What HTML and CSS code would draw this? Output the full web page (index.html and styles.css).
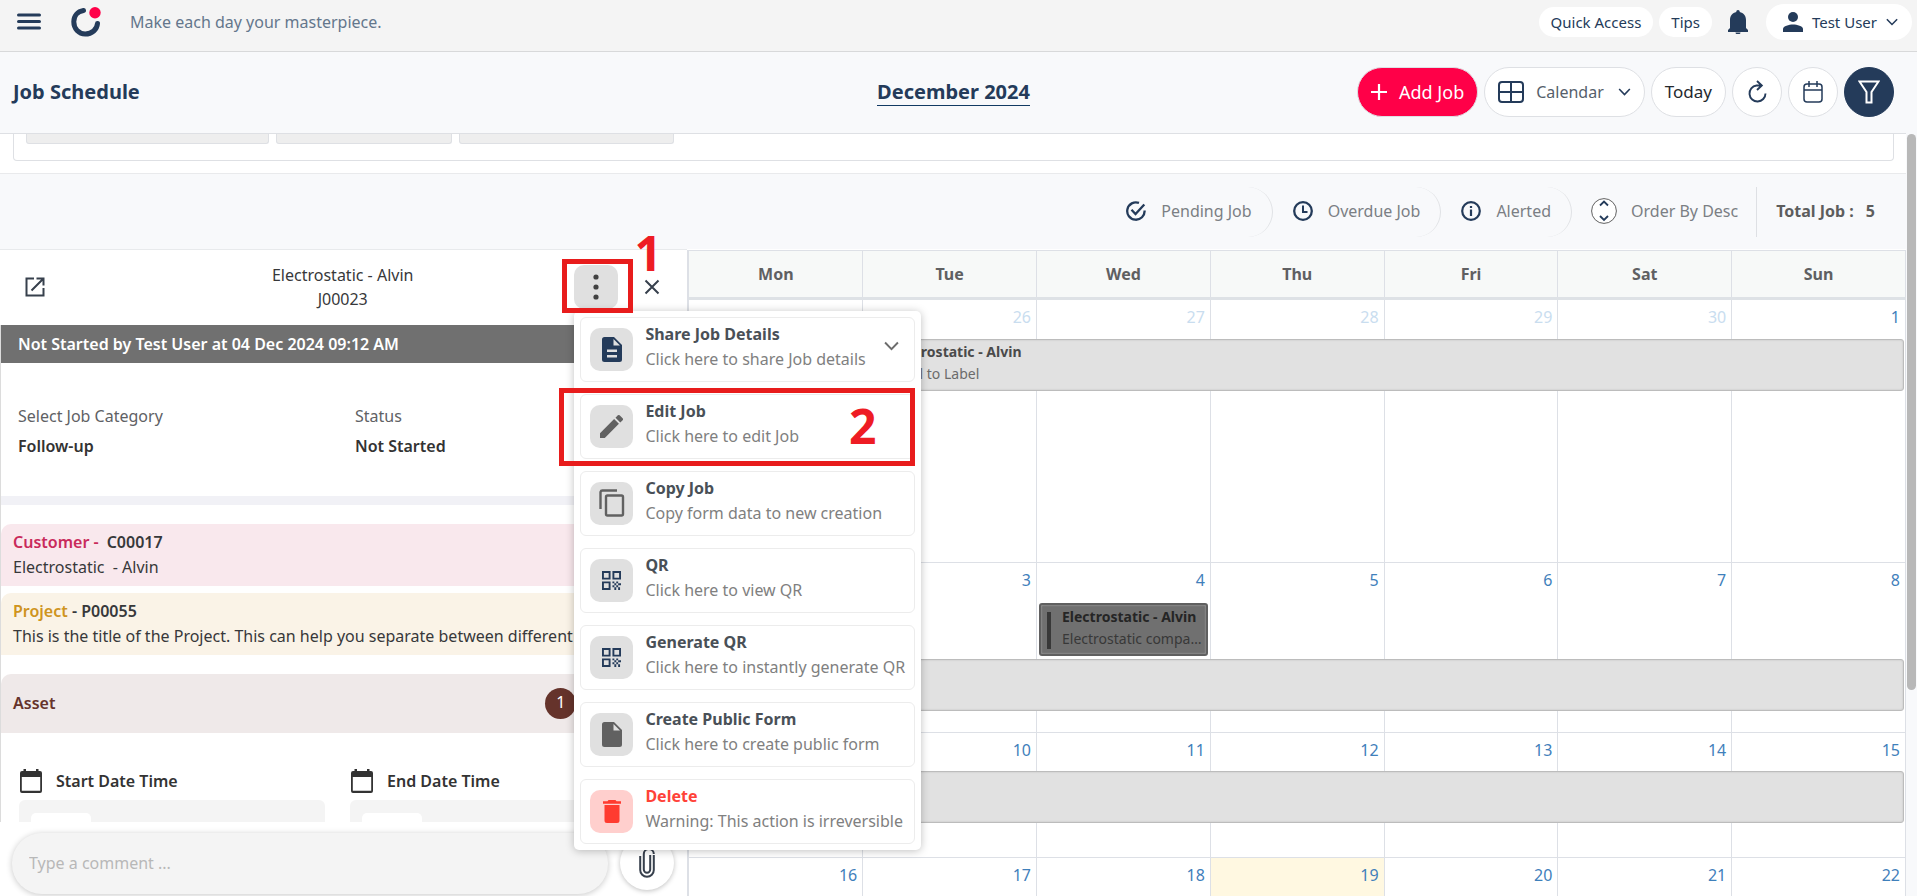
FILE: index.html
```html
<!DOCTYPE html>
<html lang="en">
<head>
<meta charset="utf-8">
<meta name="viewport" content="width=device-width, initial-scale=1">
<title>Job Schedule</title>
<link rel="stylesheet" href="styles.css">
</head>
<body>
<svg class="sprite" aria-hidden="true">
  <symbol id="i-down" viewBox="0 0 14 9"><path d="M1 1.200l6 6.200 6-6.200" fill="none" stroke="currentColor" stroke-width="1.800"/></symbol>
  <symbol id="i-qr" viewBox="0 0 20 20"><path fill="currentColor" fill-rule="evenodd" d="M0 0h9v9H0zM2 2v5h5V2zM11 0h9v9h-9zM13 2v5h5V2zM0 11h9v9H0zM2 13v5h5v-5zM11 11h2v2h-2zM15 11h2v2h-2zM13 13h2v2h-2zM17 13h3v2h-3zM11 15h2v2h-2zM15 15h2v2h-2zM13 17h2v3h-2zM17 17h2v3h-2z"/></symbol>
  <symbol id="i-date" viewBox="0 0 22 24"><path fill="currentColor" fill-rule="evenodd" d="M3.500 0h2.500v2h10V0h2.500v2H20a2 2 0 0 1 2 2v18a2 2 0 0 1-2 2H2a2 2 0 0 1-2-2V4a2 2 0 0 1 2-2h1.500zM1.800 8v13.800h18.400V8z"/></symbol>
</svg>

<header class="topbar">
  <button class="plain menu-btn" aria-label="Menu"><svg width="24" height="18" viewBox="0 0 24 18"><path d="M1.500 2h21M1.500 8.500h21M1.500 15h21" stroke="#243b5a" stroke-width="3" stroke-linecap="round"/></svg></button>
  <a class="logo" href="#" aria-label="Home"><svg width="30" height="30" viewBox="0 0 30 30"><path d="M12.500 3.500C6.500 4.500 2.800 9 2.800 14.800c0 7 5 12.200 11.400 12.200 6.800 0 11.800-4.500 12.300-10.500" fill="none" stroke="#243b5a" stroke-width="5" stroke-linecap="round"/><circle cx="24" cy="5.800" r="5.700" fill="#ff0048"/></svg></a>
  <p class="motto">Make each day your masterpiece.</p>
  <nav class="top-actions">
    <button class="chip">Quick Access</button>
    <button class="chip">Tips</button>
    <button class="plain bell" aria-label="Notifications"><svg width="20" height="24" viewBox="0 0 20 24"><path fill="#243b5a" d="M10 0a1.700 1.700 0 0 1 1.700 1.900C15.500 2.700 18 5.500 18 10v8l2 2v2H0v-2l2-2v-8c0-4.500 2.500-7.300 6.300-8.100A1.700 1.700 0 0 1 10 0zM7.500 22.500h5a2.500 1.800 0 0 1-5 0z"/></svg></button>
    <button class="chip user"><svg width="20" height="20" viewBox="0 0 20 20"><g fill="#243b5a"><circle cx="10" cy="5" r="5"/><path d="M0 20v-3c0-3 6-4.500 10-4.500s10 1.500 10 4.500v3z"/></g></svg><span>Test User</span><svg class="chev" width="12" height="8"><use href="#i-down"/></svg></button>
  </nav>
</header>

<div class="page">
<main class="content">
  <section class="toolbar">
    <h1>Job Schedule</h1>
    <button class="plain month">December 2024</button>
    <div class="tools">
      <button class="pill add"><svg width="16" height="16" viewBox="0 0 16 16"><path d="M8 0v16M0 8h16" stroke="#fff" stroke-width="2.200"/></svg>Add Job</button>
      <button class="pill view"><svg width="26" height="22" viewBox="0 0 26 22"><path d="M4 1h18a3 3 0 0 1 3 3v14a3 3 0 0 1-3 3H4a3 3 0 0 1-3-3V4a3 3 0 0 1 3-3zM13 1v20M1 11h24" fill="none" stroke="#243b5a" stroke-width="2"/></svg><span>Calendar</span><svg class="chev" width="13" height="8"><use href="#i-down"/></svg></button>
      <button class="pill today">Today</button>
      <button class="round" aria-label="Refresh"><svg width="20" height="24" viewBox="0 0 20 24"><path d="M14.500 5.500H9.500a8 8 0 1 0 9 8M10 1l4.800 4.500L10 10" fill="none" stroke="#243b5a" stroke-width="1.900"/></svg></button>
      <button class="round" aria-label="Pick date"><svg width="20" height="22" viewBox="0 0 20 22"><path d="M4 3h12a3 3 0 0 1 3 3v12a3 3 0 0 1-3 3H4a3 3 0 0 1-3-3V6a3 3 0 0 1 3-3zM1 9h18M6 0v6M14 0v6" fill="none" stroke="#243b5a" stroke-width="1.500"/></svg></button>
      <button class="round filter" aria-label="Filter"><svg width="22" height="24" viewBox="0 0 22 24"><path d="M1.500 1.500h19L13.500 12v10.500h-5V12z" fill="none" stroke="#fff" stroke-width="2"/></svg></button>
    </div>
  </section>

  <section class="filters"><div class="filter-card"><i></i><i></i><i></i></div></section>

  <section class="legend">
    <button class="plain tag"><svg width="20" height="20" viewBox="0 0 20 20"><path d="M18.600 9.500A8.700 8.700 0 1 1 13 1.900M5.500 8.800l4 4.200 8.800-9.500" fill="none" stroke="#243b5a" stroke-width="2.300"/></svg>Pending Job</button>
    <button class="plain tag"><svg width="20" height="20" viewBox="0 0 20 20"><circle cx="10" cy="10" r="8.800" fill="none" stroke="#243b5a" stroke-width="2.300"/><path d="M10 4.500V11h4.500" fill="none" stroke="#243b5a" stroke-width="2"/></svg>Overdue Job</button>
    <button class="plain tag"><svg width="20" height="20" viewBox="0 0 20 20"><circle cx="10" cy="10" r="8.800" fill="none" stroke="#243b5a" stroke-width="2.200"/><path d="M10 5v2M10 8.500v6.500" stroke="#243b5a" stroke-width="2.200"/></svg>Alerted</button>
    <button class="plain order"><svg width="26" height="26" viewBox="0 0 26 26"><circle cx="13" cy="13" r="12.400" fill="#fff" stroke="#616161" stroke-width="1"/><path d="M9 7.500l4-4 4 4M9 18l4 4 4-4" fill="none" stroke="#243b5a" stroke-width="1.800"/></svg>Order By Desc</button>
    <p class="total"><span>Total Job :</span><span>5</span></p>
  </section>

  <div class="board">
    <aside class="detail">
      <header class="detail-head">
        <a class="open" href="#" aria-label="Open job"><svg width="20" height="20" viewBox="0 0 20 20"><path d="M9 1.500H1.500v17h17V11M11.500 1.500h7v7M18 2L6.500 13.500" fill="none" stroke="#37404d" stroke-width="2"/></svg></a>
        <h2>Electrostatic - Alvin<br>J00023</h2>
        <div class="head-actions">
          <div class="more">
            <button class="dots" aria-label="More actions"><svg width="6" height="26" viewBox="0 0 6 26"><g fill="#424242"><circle cx="3" cy="3" r="2.600"/><circle cx="3" cy="13" r="2.600"/><circle cx="3" cy="23" r="2.600"/></g></svg></button>
            <div class="menu">
              <button class="item"><span class="ic"><svg width="20" height="25" viewBox="0 0 20 25"><path fill="#243b5a" fill-rule="evenodd" d="M2.500 0H12l8 8v14.500a2.500 2.500 0 0 1-2.500 2.500h-15A2.500 2.500 0 0 1 0 22.500v-20A2.500 2.500 0 0 1 2.500 0zM11.500 2v6.500H18zM5 12.500V15h10v-2.500zM5 18v2.500h10V18z"/></svg></span><span class="tx"><b>Share Job Details</b><small>Click here to share Job details</small></span><svg class="chev" width="15" height="10"><use href="#i-down"/></svg></button>
              <button class="item"><span class="ic"><svg width="23" height="23" viewBox="3 3 18 18"><path fill="#616161" d="M3 17.250V21h3.750L17.810 9.940l-3.750-3.750zM20.710 7.040a1 1 0 0 0 0-1.410l-2.340-2.340a1 1 0 0 0-1.410 0l-1.830 1.830 3.750 3.750z"/></svg></span><span class="tx"><b>Edit Job</b><small>Click here to edit Job</small></span></button>
              <button class="item"><span class="ic"><svg width="26" height="28" viewBox="0 0 26 28"><path d="M1.500 20V3a2 2 0 0 1 2-1.500H18" fill="none" stroke="#616161" stroke-width="2.400"/><rect x="7" y="6.500" width="17" height="20" rx="1.500" fill="none" stroke="#616161" stroke-width="2.400"/></svg></span><span class="tx"><b>Copy Job</b><small>Copy form data to new creation</small></span></button>
              <button class="item navy"><span class="ic"><svg width="19" height="19"><use href="#i-qr"/></svg></span><span class="tx"><b>QR</b><small>Click here to view QR</small></span></button>
              <button class="item navy"><span class="ic"><svg width="19" height="19"><use href="#i-qr"/></svg></span><span class="tx"><b>Generate QR</b><small>Click here to instantly generate QR</small></span></button>
              <button class="item"><span class="ic"><svg width="20" height="25" viewBox="0 0 20 25"><path fill="#616161" fill-rule="evenodd" d="M2.500 0H12l8 8v14.500a2.500 2.500 0 0 1-2.500 2.500h-15A2.500 2.500 0 0 1 0 22.500v-20A2.500 2.500 0 0 1 2.500 0zM11.500 2v6.500H18z"/></svg></span><span class="tx"><b>Create Public Form</b><small>Click here to create public form</small></span></button>
              <button class="item danger"><span class="ic"><svg width="18" height="23" viewBox="0 0 18 23"><path fill="#ff3b30" d="M1.500 5h15v15.500a2.500 2.500 0 0 1-2.500 2.500H4a2.500 2.500 0 0 1-2.500-2.500zM0 1.200h4.500L5.500 0h7l1 1.200H18v2.500H0z"/></svg></span><span class="tx"><b>Delete</b><small>Warning: This action is irreversible</small></span></button>
              <div class="mark mark-edit"><em>2</em></div>
            </div>
            <div class="mark mark-dots"><em>1</em></div>
          </div>
          <button class="plain close" aria-label="Close"><svg width="16" height="16" viewBox="0 0 16 16"><path d="M1.500 1.500l13 13M14.500 1.500l-13 13" stroke="#37404d" stroke-width="2"/></svg></button>
        </div>
      </header>

      <div class="detail-body">
        <p class="state">Not Started by Test User at 04 Dec 2024 09:12 AM</p>
        <dl class="facts">
          <div><dt>Select Job Category</dt><dd>Follow-up</dd></div>
          <div><dt>Status</dt><dd>Not Started</dd></div>
        </dl>
        <div class="customer card"><h3><span>Customer - </span> C00017</h3><p>Electrostatic&nbsp; - Alvin</p></div>
        <div class="project card"><h3><span>Project</span> - P00055</h3><p>This is the title of the Project. This can help you separate between different</p></div>
        <div class="asset card"><h3>Asset</h3><span class="count">1</span></div>
        <div class="dates">
          <div><h3><svg width="22" height="24"><use href="#i-date"/></svg>Start Date Time</h3><div class="date-box"><i></i></div></div>
          <div><h3><svg width="22" height="24"><use href="#i-date"/></svg>End Date Time</h3><div class="date-box"><i></i></div></div>
        </div>
      </div>

      <form class="comment">
        <input type="text" placeholder="Type a comment ..." aria-label="Comment">
        <button type="button" class="clip" aria-label="Attach file"><svg width="16" height="30" viewBox="0 0 16 30"><path d="M14.800 7v15a6.800 6.800 0 0 1-13.600 0V8M4.800 21V6a5 5 0 0 1 10 0M4.800 10v11.500a3.200 3.200 0 0 0 6.400 0V7" fill="none" stroke="#37404d" stroke-width="2"/></svg></button>
      </form>
    </aside>

    <section class="calendar">
      <div class="days"><b>Mon</b><b>Tue</b><b>Wed</b><b>Thu</b><b>Fri</b><b>Sat</b><b>Sun</b></div>
      <div class="week w1 past">
        <a href="#">25</a><a href="#">26</a><a href="#">27</a><a href="#">28</a><a href="#">29</a><a href="#">30</a><a href="#" class="now">1</a>
        <div class="event from-tue"><b>Electrostatic - Alvin</b><span>Email to Label</span></div>
      </div>
      <div class="week w2">
        <a href="#">2</a><a href="#">3</a><a href="#">4</a><a href="#">5</a><a href="#">6</a><a href="#">7</a><a href="#">8</a>
        <div class="event dark"><b>Electrostatic - Alvin</b><span>Electrostatic company visit</span></div>
        <div class="event second"></div>
      </div>
      <div class="week w3">
        <a href="#">9</a><a href="#">10</a><a href="#">11</a><a href="#">12</a><a href="#">13</a><a href="#">14</a><a href="#">15</a>
        <div class="event"></div>
      </div>
      <div class="week w4">
        <a href="#">16</a><a href="#">17</a><a href="#">18</a><a href="#" class="current">19</a><a href="#">20</a><a href="#">21</a><a href="#">22</a>
      </div>
    </section>
  </div>
</main>
<div class="rail"><div class="thumb"></div></div>
</div>
</body>
</html>
```
FILE: styles.css
```css
:root {
  --navy: #243b5a;
  --line: #dee0e4;
  --grid: #dde0e6;
  --soft: #f8f9fb;
}
* { box-sizing: border-box; }
body {
  margin: 0;
  height: 100vh;
  display: flex;
  flex-direction: column;
  overflow: hidden;
  background: #fff;
  color: #37383a;
  font: 16px/24px "Noto Sans", sans-serif;
}
h1, h2, h3, p, dl, dd { margin: 0; font-size: inherit; }
h2 { font-weight: 400; }
h3 { font-weight: 600; }
button, input { font: inherit; color: inherit; }
button { cursor: pointer; }
a { color: inherit; text-decoration: none; }
svg { display: block; flex: none; }
.sprite { position: absolute; width: 0; height: 0; }
.plain { border: 0; background: none; padding: 0; }

/* Top bar */
.topbar {
  flex: none;
  display: flex;
  align-items: center;
  height: 52px;
  padding: 0 5px 8px 17px;
  background: #f4f4f4;
  border-bottom: 1px solid #d8d9da;
  color: var(--navy);
}
.logo { margin-left: 30px; }
.motto { margin-left: 29px; color: #64778c; }
.top-actions { margin-left: auto; display: flex; align-items: center; gap: 6px; font-size: 15px; }
.chip { height: 30px; padding: 0 12px; border: 0; border-radius: 18px; background: #fff; }
.bell { margin: 0 12px 0 10px; }
.user { display: flex; align-items: center; gap: 9px; height: 36px; padding: 0 14px 0 17px; }

.page { flex: 1; min-height: 0; display: flex; }
.content { flex: 1; min-width: 0; display: flex; flex-direction: column; }
.rail { flex: 0 0 11px; padding: 82px 1px 0; background: var(--soft); }
.thumb { height: 73%; border-radius: 5px; background: #b8b8b8; }

/* Toolbar */
.toolbar {
  flex: none;
  display: grid;
  grid-template-columns: 1fr auto 1fr;
  align-items: center;
  height: 82px;
  padding: 0 12px 1px 13px;
  background: var(--soft);
  border-bottom: 1px solid var(--line);
  color: var(--navy);
}
h1 { font-size: 20px; }
.month { border-bottom: 1px solid #123a63; font-size: 20px; font-weight: 700; line-height: 27px; }
.tools { display: flex; justify-content: flex-end; gap: 6px; }
.pill, .round {
  display: flex;
  align-items: center;
  justify-content: center;
  height: 50px;
  border: 1px solid var(--line);
  border-radius: 25px;
  background: #fff;
}
.pill { padding: 0 13px; font-size: 17px; }
.round { width: 50px; padding: 0; }
.add { gap: 12px; background: #ff0048; color: #fff; font-size: 18px; }
.view { gap: 12px; color: #565f6b; font-size: 16px; }
.view .chev { margin-left: 2px; color: var(--navy); }
.today { color: #25292e; }
.filter { background: var(--navy); border-color: var(--navy); }

/* Filter card scrolled under the toolbar */
.filters { flex: none; padding: 0 12px 12px 13px; border-bottom: 1px solid #e9eaec; }
.filter-card { display: flex; gap: 7px; height: 27px; padding: 0 12px; border: 1px solid var(--line); border-top: 0; border-radius: 0 0 4px 4px; }
.filter-card i { height: 10px; width: 243px; background: #eee; border: 1px solid var(--line); border-top: 0; border-radius: 0 0 3px 3px; }
.filter-card i:nth-child(2) { width: 176px; }
.filter-card i:nth-child(3) { width: 215px; }

/* Legend */
.legend {
  flex: none;
  display: flex;
  justify-content: flex-end;
  align-items: center;
  height: 75px;
  padding-right: 31px;
  background: var(--soft);
  color: #7b7f84;
}
.tag, .order { display: flex; align-items: center; height: 50px; gap: 15px; padding-bottom: 2px; }
.tag { padding: 0 20px 2px; border-right: 1px solid #e0e2e5; border-radius: 25px; }
.order { gap: 14px; padding: 0 18px 2px 19px; }
.total { display: flex; align-items: center; gap: 12px; height: 50px; padding: 0 0 2px 19px; border-left: 1px solid var(--line); color: #5d5d5d; font-weight: 700; }

/* Board */
.board { flex: 1; min-height: 0; display: grid; grid-template-columns: 22fr 39fr; }
.detail { position: relative; z-index: 2; display: flex; flex-direction: column; min-width: 0; min-height: 0; border-top: 1px solid #e8eaec; }
.detail-head { flex: none; display: grid; grid-template-columns: 1fr auto 1fr; align-items: center; height: 75px; padding: 0 27px 2px 25px; }
.detail-head h2 { text-align: center; }
.open { justify-self: start; }
.head-actions { display: flex; align-items: center; justify-content: flex-end; gap: 26px; }
.more { position: relative; }
.dots { display: grid; place-items: center; width: 44px; height: 44px; padding: 0; border: 0; border-radius: 10px; background: #e0e0e0; }

.menu {
  position: absolute;
  top: calc(100% + 2px);
  left: 0;
  width: 347px;
  padding: 6px;
  display: grid;
  gap: 12px;
  background: #fff;
  border-radius: 5px;
  box-shadow: 0 1px 8px rgba(0, 0, 0, .25);
}
.item { display: flex; align-items: center; height: 65px; padding: 0 0 0 9px; border: 1px solid #ececec; border-radius: 6px; background: #fff; text-align: left; }
.ic { flex: none; display: grid; place-items: center; width: 43px; height: 43px; margin-right: 12px; border-radius: 10px; background: #e0e0e0; }
.navy { color: var(--navy); }
.tx { display: flex; flex-direction: column; padding-bottom: 4px; line-height: 25px; white-space: nowrap; }
.tx b { color: #495057; }
.tx small { color: #808080; font-size: 16px; }
.item .chev { margin: 0 15px 6px auto; color: #6c6c6c; }
.danger .ic { background: #ffcfcd; }
.danger .tx b { color: #ff4238; }

.mark { position: absolute; border: 5px solid #e81c1c; pointer-events: none; }
.mark em { position: absolute; color: #ee1c24; font: 700 48px/48px "Noto Sans", sans-serif; }
.mark-dots { inset: -6px -15px -4px -12px; }
.mark-dots em { left: 67px; top: -35px; }
.mark-edit { left: -15px; right: 6px; top: 77px; height: 78px; }
.mark-edit em { right: 34px; top: 9px; }

.detail-body { flex: 1; min-height: 0; overflow: hidden; border-left: 1px solid #dcdcdc; }
.state { padding: 7px 17px; background: #707070; color: #fff; font-weight: 600; }
.facts { display: grid; grid-template-columns: 337px 1fr; padding: 38px 17px 34px; height: 142px; border-bottom: 9px solid #f1f1f6; line-height: 30px; }
.facts dt { color: #606164; }
.facts dd { font-weight: 600; color: #333; }
.card { padding: 6px 12px; border-radius: 10px 0 0 0; line-height: 25px; white-space: nowrap; overflow: hidden; }
.customer { margin-top: 19px; background: #f9e8ed; }
.customer h3 { display: flex; gap: 8px; }
.customer h3 span { color: #c92a5b; }
.project { margin-top: 7px; padding-right: 112px; background: #faf3e7; }
.project h3 span { color: #cf9420; }
.asset { display: flex; align-items: center; justify-content: space-between; height: 59px; margin-top: 19px; padding-right: 111px; background: #efe9e9; color: #65332b; }
.count { width: 31px; height: 31px; border-radius: 50%; background: #65332b; color: #fff; text-align: center; line-height: 29px; }
.dates { display: grid; grid-template-columns: 306px 306px; gap: 25px; padding: 36px 18px 0; }
.dates h3 { display: flex; align-items: center; gap: 14px; height: 24px; margin: 0 1px 7px; color: #333; }
.date-box { height: 60px; padding: 13px 12px; border-radius: 6px; background: #f4f4f4; }
.date-box i { display: block; width: 60px; height: 40px; border-radius: 5px; background: #fff; }

.comment { flex: none; display: flex; align-items: center; gap: 12px; height: 74px; padding: 8px 12px 0; }
.comment input { width: 596px; height: 61px; padding: 0 17px; border: 0; border-radius: 30px; background: #f4f4f4; box-shadow: 0 1px 6px rgba(0, 0, 0, .22); }
.comment input::placeholder { color: #b8b8b8; opacity: 1; }
.clip { display: grid; place-items: center; width: 54px; height: 54px; padding: 0; border: 0; border-radius: 50%; background: #fff; box-shadow: 0 1px 5px rgba(0, 0, 0, .25); }

/* Calendar */
.calendar { min-width: 0; margin-top: 1px; border-left: 2px solid var(--grid); border-top: 1px solid var(--grid); overflow: hidden; }
.days, .week { display: grid; grid-template-columns: repeat(7, minmax(0, 1fr)); }
.days { height: 49px; border-bottom: 3px solid #dee2e6; background: #f7f9f8; color: #5f6062; text-align: center; line-height: 46px; }
.days b { border-right: 1px solid var(--grid); }
.week { grid-template-rows: 39px; grid-auto-rows: min-content; row-gap: 3px; border-bottom: 1px solid var(--grid); }
.week a { grid-row: 1 / span 4; padding: 5px 5px 0; border-right: 1px solid var(--grid); text-align: right; color: #3f80bb; }
.week a:nth-child(1) { grid-column: 1; }
.week a:nth-child(2) { grid-column: 2; }
.week a:nth-child(3) { grid-column: 3; }
.week a:nth-child(4) { grid-column: 4; }
.week a:nth-child(5) { grid-column: 5; }
.week a:nth-child(6) { grid-column: 6; }
.week a:nth-child(7) { grid-column: 7; }
.past a { color: #c9ddef; }
.week .now { color: #3f80bb; }
.week .current { background: #fff8e1; }
.w1 { height: 263px; grid-template-rows: 39px auto 1fr; row-gap: 0; }
.w2 { height: 170px; grid-template-rows: 37px auto auto 1fr; }
.w3 { height: 125px; grid-template-rows: 38px auto 1fr; row-gap: 0; }
.w4 { height: 125px; }
.event {
  grid-row: 2;
  grid-column: 1 / -1;
  display: flex;
  flex-direction: column;
  height: 52px;
  margin: 0 2px;
  padding: 1px 8px 0 21px;
  border: 1px solid #bcbcbc;
  border-radius: 3px;
  background: #e1e1e1;
  box-shadow: inset 0 0 2px #bcbcbc;
  font-size: 14px;
  line-height: 22px;
  white-space: nowrap;
  color: #6b6b6b;
}
.event b { color: #4a4a4a; font-weight: 700; }
.from-tue { grid-column: 2 / -1; }
.second { grid-row: 3; }
.dark {
  grid-column: 3;
  height: 53px;
  margin: 0 3px 0 2px;
  padding: 1px 1px 0 21px;
  background: linear-gradient(#383838, #383838) 6px 7px / 4px 37px no-repeat, #707070;
  border: 2px solid #606060;
  color: #383838;
}
.event.dark b { color: #252525; }
.dark b, .dark span { overflow: hidden; text-overflow: ellipsis; }
```
